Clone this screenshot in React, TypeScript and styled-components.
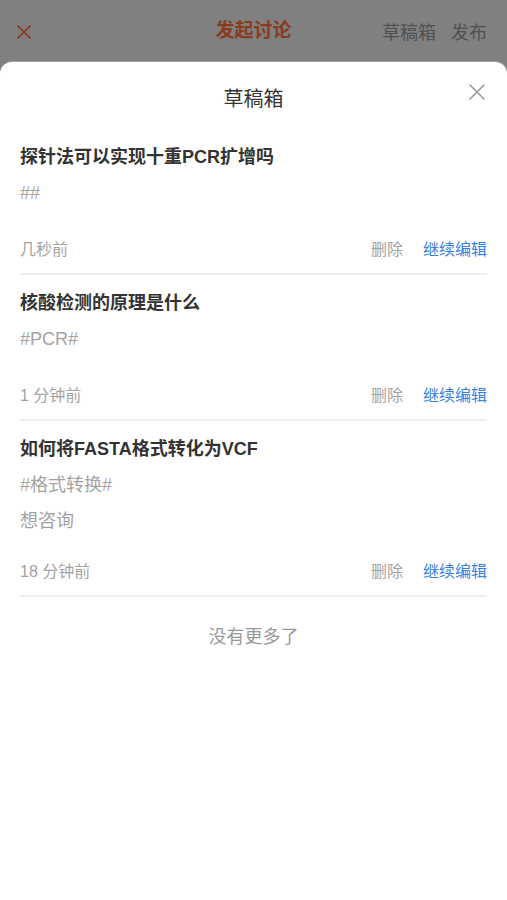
import React from "react";
import styled, { createGlobalStyle } from "styled-components";

const GlobalStyle = createGlobalStyle`
  html, body {
    margin: 0;
    padding: 0;
    background: #808080;
  }
  body {
    font-family: "Liberation Sans", "Noto Sans CJK SC", sans-serif;
  }
`;

type Draft = {
  title: string;
  tag: string;
  body?: string;
  time: string;
};

const drafts: Draft[] = [
  { title: "探针法可以实现十重PCR扩增吗", tag: "##", time: "几秒前" },
  { title: "核酸检测的原理是什么", tag: "#PCR#", time: "1 分钟前" },
  {
    title: "如何将FASTA格式转化为VCF",
    tag: "#格式转换#",
    body: "想咨询",
    time: "18 分钟前",
  },
];

const CloseIcon = ({ size, color, stroke }: { size: number; color: string; stroke: number }) => (
  <svg width={size} height={size} viewBox="0 0 16 16" fill="none">
    <path d="M1 1L15 15M15 1L1 15" stroke={color} strokeWidth={stroke} strokeLinecap="round" />
  </svg>
);

const App: React.FunctionComponent = () => {
  return (
    <>
      <GlobalStyle />
      <Page>
        <TopBar>
          <TopClose>
            <CloseIcon size={14} color="#8c3c22" stroke={1.8} />
          </TopClose>
          <TopTitle>发起讨论</TopTitle>
          <TopActions>
            <TopAction>草稿箱</TopAction>
            <TopAction>发布</TopAction>
          </TopActions>
        </TopBar>
        <Sheet>
          <SheetHeader>
            <SheetTitle>草稿箱</SheetTitle>
            <SheetClose>
              <CloseIcon size={16} color="#999" stroke={1.6} />
            </SheetClose>
          </SheetHeader>
          <List>
            {drafts.map((d) => (
              <Item key={d.title}>
                <ItemTitle>{d.title}</ItemTitle>
                <Tag>{d.tag}</Tag>
                <Body $empty={!d.body}>{d.body}</Body>
                <Meta>
                  <Time>{d.time}</Time>
                  <Actions>
                    <Delete>删除</Delete>
                    <Edit>继续编辑</Edit>
                  </Actions>
                </Meta>
              </Item>
            ))}
          </List>
          <NoMore>没有更多了</NoMore>
        </Sheet>
      </Page>
    </>
  );
};

export default App;

const Page = styled.div`
  display: flex;
  flex-direction: column;
  min-height: 100vh;
`;

const TopBar = styled.header`
  position: relative;
  display: flex;
  align-items: center;
  justify-content: space-between;
  height: 62px;
  padding: 0 20px 0 17px;
  box-sizing: border-box;
`;

const TopClose = styled.div`
  display: flex;
  align-items: center;
  padding-top: 2px;
`;

const TopTitle = styled.div`
  position: absolute;
  left: 0;
  right: 0;
  text-align: center;
  font-size: 19px;
  font-weight: 700;
  color: #8a3b1d;
  line-height: 62px;
  pointer-events: none;
`;

const TopActions = styled.div`
  display: flex;
  gap: 15px;
`;

const TopAction = styled.span`
  font-size: 18px;
  color: #505050;
`;

const Sheet = styled.section`
  flex: 1;
  background: #fff;
  border-radius: 12px 12px 0 0;
  box-shadow: 0 -1px 0 rgba(255, 255, 255, 0.25);
  padding: 0 20px;
`;

const SheetHeader = styled.div`
  position: relative;
  padding: 19px 0 12px;
  text-align: center;
`;

const SheetTitle = styled.h2`
  margin: 0;
  font-size: 20px;
  font-weight: 400;
  line-height: 36px;
  height: 36px;
  color: #333;
`;

const SheetClose = styled.div`
  position: absolute;
  right: 2px;
  top: 22px;
  display: flex;
`;

const List = styled.div`
  display: flex;
  flex-direction: column;
`;

const Item = styled.div`
  padding-top: 10px;
  border-bottom: 2px solid #eeeeee;
`;

const ItemTitle = styled.div`
  font-size: 18px;
  font-weight: 700;
  line-height: 36px;
  height: 36px;
  color: #333;
`;

const Tag = styled.div`
  font-size: 18px;
  line-height: 36px;
  height: 36px;
  color: #a3a3a3;
`;

const Body = styled.div<{ $empty: boolean }>`
  font-size: 18px;
  line-height: 36px;
  color: #a3a3a3;
  height: ${(p) => (p.$empty ? "6px" : "36px")};
`;

const Meta = styled.div`
  display: flex;
  align-items: center;
  justify-content: space-between;
  margin: 13px 0 7px;
  height: 36px;
  font-size: 16px;
`;

const Time = styled.span`
  color: #a3a3a3;
`;

const Actions = styled.div`
  display: flex;
  gap: 20px;
`;

const Delete = styled.span`
  color: #a3a3a3;
`;

const Edit = styled.span`
  color: #3b7fe4;
`;

const NoMore = styled.div`
  padding-top: 22px;
  text-align: center;
  font-size: 18px;
  line-height: 36px;
  color: #999;
`;
